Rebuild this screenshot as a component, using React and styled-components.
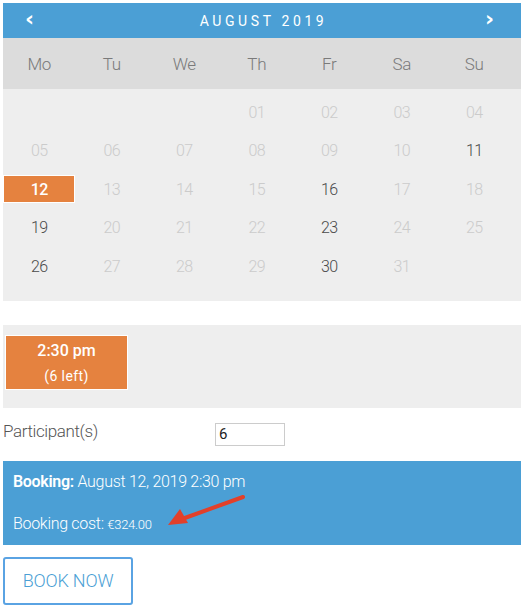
import React from 'react'
import styled, { createGlobalStyle } from 'styled-components';

const Global = createGlobalStyle`
body{
margin:0;
padding:3px;
font-family:Roboto, "DejaVu Sans Condensed", sans-serif;
font-weight:300;
background:#fff;
}
`;

const Wrap = styled.div`
width:518px;
display:flex;
flex-direction:column;
`;

const Header = styled.div`
height:35px;
background:#4b9fd5;
display:flex;
align-items:center;
justify-content:space-between;
padding:0 27px 0 22px;
color:#fff;
`;
const Arrow = styled.span`
font-size:22px;
font-weight:700;
font-family:"DejaVu Sans", sans-serif;
line-height:1;
margin-top:-4px;
`;
const Month = styled.div`
font-size:14px;
font-weight:400;
letter-spacing:3.6px;
margin-left:8px;
`;

const DayNames = styled.div`
display:grid;
grid-template-columns:repeat(7, 72.5px);
height:51px;
align-items:center;
background:#dcdcdc;
color:#7a7a7a;
font-size:17px;
text-align:center;
letter-spacing:-0.3px;
`;

const Days = styled.div`
display:grid;
grid-template-columns:repeat(7, 72.5px);
grid-auto-rows:38.5px;
padding:4px 0 15px;
background:#eeeeee;
`;
const Day = styled.div`
display:flex;
align-items:center;
justify-content:center;
font-size:16px;
letter-spacing:-0.5px;
color:${({ $on }) => $on ? '#4a4a4a' : '#cbcbcb'};
`;
const Picked = styled.div`
width:70px;
height:26px;
background:#e5823f;
border:1px solid #fff;
display:flex;
align-items:center;
justify-content:center;
color:#fff;
font-weight:500;
font-size:16px;
`;

const Slots = styled.div`
margin-top:24px;
height:83px;
background:#eeeeee;
padding:10px 2px;
box-sizing:border-box;
`;
const Slot = styled.div`
width:121px;
height:51px;
padding-top:2px;
background:#e5823f;
border:1px solid #fff;
color:#fff;
display:flex;
flex-direction:column;
align-items:center;
justify-content:center;
gap:10px;
`;
const SlotTime = styled.div`
font-size:16px;
font-weight:500;
line-height:1;
`;
const SlotLeft = styled.div`
font-size:14px;
font-weight:400;
letter-spacing:0.4px;
line-height:1;
`;

const Row = styled.div`
display:flex;
align-items:center;
height:53px;
`;
const Label = styled.div`
width:212px;
font-size:17px;
color:#555;
margin-top:-6px;
letter-spacing:-0.4px;
`;
const Input = styled.input`
width:70px;
height:23px;
box-sizing:border-box;
border:1px solid #ccc;
padding:0 3px;
font-family:inherit;
font-weight:400;
font-size:15px;
color:#222;
outline:none;
`;

const Booking = styled.div`
position:relative;
height:84px;
background:#4b9fd5;
color:#fff;
padding:10px 10px 0;
box-sizing:border-box;
font-size:16px;
letter-spacing:-0.3px;
`;
const Line = styled.div`
line-height:22px;
margin-bottom:${({ $gap }) => $gap || 0}px;
b{ font-weight:600; }
`;
const Cost = styled.span`
font-size:13px;
`;
const Pointer = styled.svg`
position:absolute;
left:155px;
top:30px;
`;

const BookBtn = styled.button`
margin-top:12px;
width:130px;
height:48px;
background:#fff;
border:2px solid #5aa3e3;
border-radius:3px;
color:#4b9fd5;
font-family:inherit;
font-weight:300;
font-size:18px;
letter-spacing:-0.2px;
`;

const names = ['Mo', 'Tu', 'We', 'Th', 'Fr', 'Sa', 'Su'];
const active = [11, 16, 19, 23, 26, 30];

export default function App() {
    const cells = [null, null, null];
    for (let d = 1; d <= 31; d++) cells.push(d);
    return (
        <Wrap>
            <Global />
            <Header>
                <Arrow>‹</Arrow>
                <Month>AUGUST 2019</Month>
                <Arrow>›</Arrow>
            </Header>
            <DayNames>
                {names.map(n => <div key={n}>{n}</div>)}
            </DayNames>
            <Days>
                {cells.map((d, i) => (
                    <Day key={i} $on={active.includes(d)}>
                        {d === 12 ? <Picked>12</Picked> : d ? String(d).padStart(2, '0') : ''}
                    </Day>
                ))}
            </Days>
            <Slots>
                <Slot>
                    <SlotTime>2:30 pm</SlotTime>
                    <SlotLeft>(6 left)</SlotLeft>
                </Slot>
            </Slots>
            <Row>
                <Label>Participant(s)</Label>
                <Input defaultValue="6" />
            </Row>
            <Booking>
                <Line $gap={20}><b>Booking:</b> August 12, 2019 2:30 pm</Line>
                <Line>Booking cost: <Cost>€324.00</Cost></Line>
                <Pointer width="95" height="40" viewBox="0 0 95 40">
                    <line x1="85" y1="6" x2="24" y2="28" stroke="#e2402a" strokeWidth="4" strokeLinecap="round" />
                    <polygon points="10,34 22,18 30,32" fill="#e2402a" />
                </Pointer>
            </Booking>
            <BookBtn>BOOK NOW</BookBtn>
        </Wrap>
    )
}
